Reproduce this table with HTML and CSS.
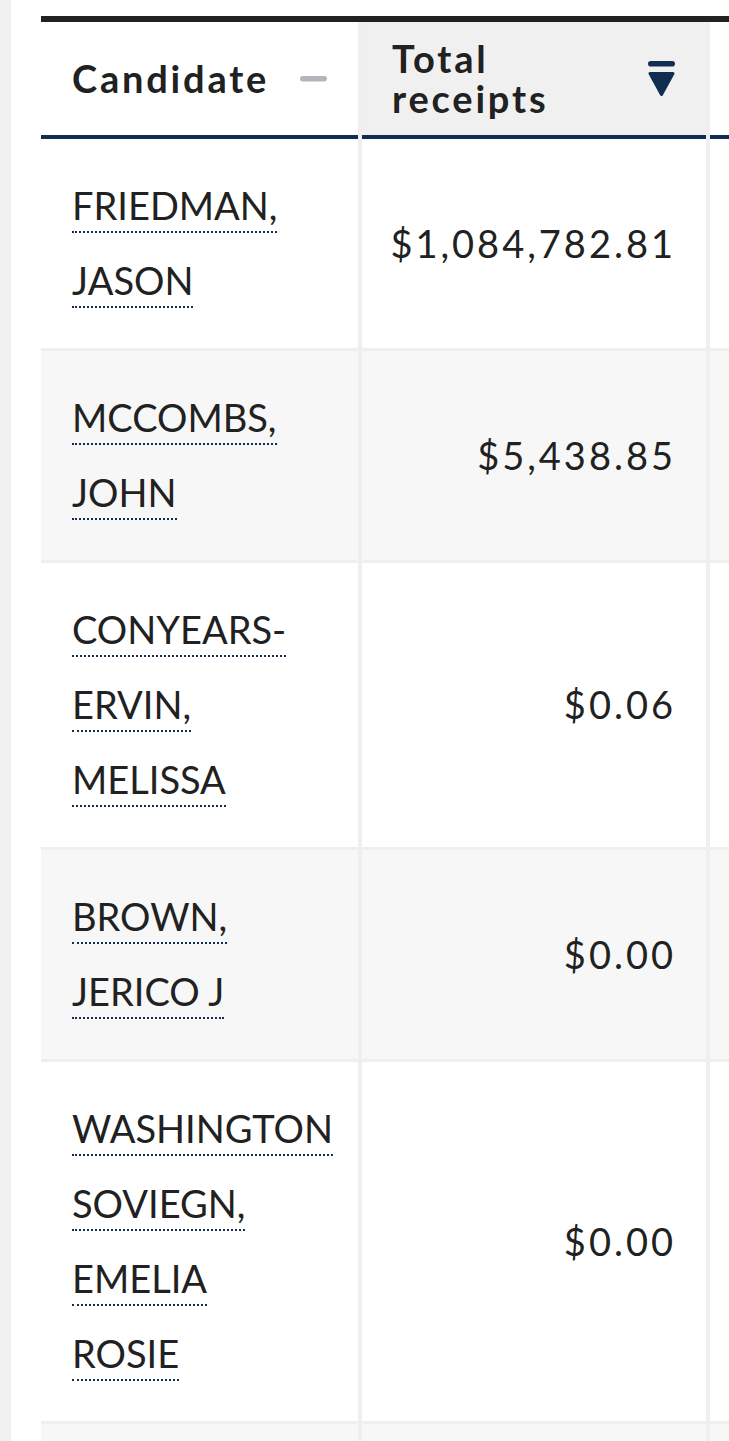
FILE: index.html
```html
<!DOCTYPE html>
<html lang="en">
<head>
<meta charset="utf-8">
<title>Candidates</title>
<link rel="stylesheet" href="styles.css">
</head>
<body>
<div class="page">
  <div class="table">
    <div class="row head">
      <div class="th">
        <span class="th-label">Candidate</span>
        <svg class="sort-icon" width="27" height="6" viewBox="0 0 27 6"><rect x="0" y="0" width="27" height="5.5" rx="2.75" fill="#b4b5bb"/></svg>
      </div>
      <div class="th sorted">
        <span class="th-label"><span class="th-line">Total</span><span class="th-line">receipts</span></span>
        <svg class="sort-icon" width="27" height="35" viewBox="0 0 27 35"><rect x="0" y="0" width="27" height="5.6" rx="2.8" fill="#112e51"/><path d="M2 12.5 L25 12.5 L13.5 33.5 Z" fill="#112e51" stroke="#112e51" stroke-width="3" stroke-linejoin="round"/></svg>
      </div>
      <div class="th"></div>
    </div>
    <div class="tbody">
      <div class="row">
        <div class="td name"><a class="link">FRIEDMAN,</a><br><a class="link">JASON</a></div>
        <div class="td num">$1,084,782.81</div>
        <div class="td"></div>
      </div>
      <div class="row alt">
        <div class="td name"><a class="link">MCCOMBS,</a><br><a class="link">JOHN</a></div>
        <div class="td num">$5,438.85</div>
        <div class="td"></div>
      </div>
      <div class="row">
        <div class="td name"><a class="link">CONYEARS-</a><br><a class="link">ERVIN,</a><br><a class="link">MELISSA</a></div>
        <div class="td num">$0.06</div>
        <div class="td"></div>
      </div>
      <div class="row alt">
        <div class="td name"><a class="link">BROWN,</a><br><a class="link">JERICO J</a></div>
        <div class="td num">$0.00</div>
        <div class="td"></div>
      </div>
      <div class="row">
        <div class="td name"><a class="link">WASHINGTON</a><br><a class="link">SOVIEGN,</a><br><a class="link">EMELIA</a><br><a class="link">ROSIE</a></div>
        <div class="td num">$0.00</div>
        <div class="td"></div>
      </div>
      <div class="row alt">
        <div class="td name"><a class="link">&nbsp;</a></div>
        <div class="td num"></div>
        <div class="td"></div>
      </div>
    </div>
  </div>
</div>
</body>
</html>
```
FILE: styles.css
```css
html, body {
  margin: 0;
  padding: 0;
  background: #f1f1f1;
  overflow: hidden;
}

.page {
  margin-left: 11px;
  background: #ffffff;
  height: 1441px;
  padding: 16px 0 0 30px;
  box-sizing: border-box;
  overflow: hidden;
  font-family: "Lato", "Liberation Sans", sans-serif;
  color: #212121;
}

.table {
  width: 1100px;
  border-top: 6px solid #212121;
}

.row {
  display: grid;
  grid-template-columns: 317px 344px 1fr;
  column-gap: 4px;
  background: #efefef;
}

.th {
  background: #ffffff;
  height: 113px;
  border-bottom: 4px solid #112e51;
  display: flex;
  align-items: center;
  justify-content: space-between;
  padding: 0 31px 0 31px;
  font-weight: 700;
  font-size: 38px;
  letter-spacing: 2.8px;
}

.th.sorted {
  background: #f0f0f0;
  padding-left: 30px;
}

.th-label {
  display: block;
  line-height: 44px;
  margin-top: -2px;
}

.th-line {
  display: block;
  height: 40px;
  line-height: 40px;
}

.sort-icon {
  display: block;
  flex: none;
}

.tbody {
  display: flex;
  flex-direction: column;
  row-gap: 3px;
  background: #efefef;
}

.td {
  background: #ffffff;
  padding: 29px 30px 30px 31px;
  font-size: 38px;
  line-height: 75px;
  letter-spacing: 0px;
}

.row.alt .td {
  background: #f7f7f7;
}

.td.num {
  display: flex;
  align-items: center;
  justify-content: flex-end;
  letter-spacing: 3px;
}

.link {
  color: #212121;
  text-decoration: none;
  border-bottom: 2px dotted #112e51;
  padding-bottom: 3px;
}
```
